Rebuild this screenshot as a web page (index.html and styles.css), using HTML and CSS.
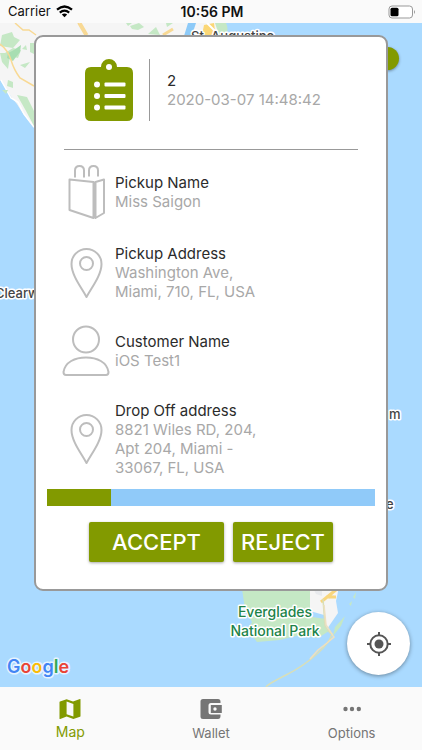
FILE: index.html
```html
<!DOCTYPE html>
<html lang="en">
<head>
<meta charset="utf-8">
<meta name="viewport" content="width=device-width, initial-scale=1">
<title>New order</title>
<link rel="stylesheet" href="styles.css">
</head>
<body>
<header class="status">
  <div class="carrier">Carrier
    <svg width="17" height="13" viewBox="0 0 17 13" fill="none" stroke="#000" stroke-width="2.2"><path d="M1 4.7Q8.500-1.700 16 4.700M3.800 7.700Q8.500 3.700 13.200 7.700"/><path d="M5.800 9.500Q8.500 7.300 11.200 9.500L8.500 12.300z" fill="#000" stroke="none"/></svg>
  </div>
  <div class="time">10:56 PM</div>
  <div class="battery">
    <svg width="28" height="14" viewBox="0 0 28 14"><rect x="1" y="1" width="23.500" height="12" rx="3" fill="#fff" stroke="#999"/><rect x="2.500" y="2.700" width="8" height="8.600" rx="1.500"/><path d="M26 5q2 2 0 4z" fill="#999"/></svg>
  </div>
</header>

<main class="stage">
  <svg class="map" viewBox="0 0 422 664" preserveAspectRatio="xMidYMid slice" aria-hidden="true">
    <rect width="422" height="664" fill="#aadaff"/>
    <path d="M0 0H225L222 20 100 85 34 105 22 89 17 81 12 75 0 57z" fill="#f5f5f5"/>
    <path d="M34 104 24 91 18 79 11 75 1 57" fill="none" stroke="#fff" stroke-width="1.500"/>
    <g fill="#c5e8c5">
      <path d="M2 12 12 9 14 14 20 17 13 25 0 23zM5 30 13 25 21 27 18 35 10 33 8 46 2 39 0 30zM30 20h4v11l-4-2zM22 26l4-4 1 5zM8 57l5 2 0 6-6-2zM17 72l10 2 7 14v15l-8-15zM20 42l10-3-5 6zM2 67l6 0-2 4zM130 3 139 0 144 4 138 7 132 6zM126 0h6l-4 3zM148 11 156 4 160 12zM166 0h7l-6 4z"/>
      <path d="M215 0h11q3 6 0 12h-7z"/>
    </g>
    <path d="M8 30 14 27 21 22 20 29 16 34 13 38 7 35z" fill="#a8deb2"/>
    <g fill="none" stroke="#f8d994" stroke-width="1.500">
      <path d="M0 21Q8 27 11 37T20 55L34 63M15 0 23 7 29 7 36 12M78 0 85 12"/>
      <path d="M80 0 87 12M173 6 163 12" stroke-width="3"/>
    </g>
    <path d="M188 0h8l-2 6-2 7h-8z" fill="#8dcaf8"/>
    <path d="M204 2 214 0 215 8 220 12H202z" fill="#fbd776"/>
    <path d="M207 0 217 10" stroke="#fff" stroke-width="2"/>
    <path d="M242 566H312V594L326 596 325 603 329 608 318 615 300 612 280 617 257 619 248 607 252 599 245 586z" fill="#c5e8c5"/>
    <path d="M310 564H339L336 578 338 590 327 606 324 592 310 588z" fill="#f5f5f5"/>
    <path d="M313 565h9v8l-6-2zM329 571l6 2-6 3z" fill="#e8eaed"/>
    <path d="M321 579 337 566M326 574h10" stroke="#f8d67d" stroke-width="3"/>
    <path d="M323 576 325 603Q329 610 332 611Q330 619 318 630Q304 643 286 652T266 664" stroke="#d8dfb9" stroke-width="1.500" fill="none"/>
    <path d="M324 582 326 602 334 614 327 620 318 627 310 636" stroke="#eee0c0" stroke-width="1.500" fill="none"/>
    <path d="M345 593 335 604 333 613 341 603zM349 581l3-3-1 5zM353 574l3-5-1 7z" fill="#c5e8c5"/>
    <g class="map-label">
      <text x="191" y="18">St. Augustine</text>
      <text x="-5" y="275">Clearwater</text>
      <text x="389" y="396">m</text>
      <text x="386" y="486">e</text>
    </g>
    <g class="park-label">
      <text x="275" y="594">Everglades</text>
      <text x="275" y="613">National Park</text>
    </g>
    <text class="google" x="7" y="650"><tspan fill="#4285f4">G</tspan><tspan fill="#ea4335">o</tspan><tspan fill="#fbbc05">o</tspan><tspan fill="#4285f4">g</tspan><tspan fill="#34a853">l</tspan><tspan fill="#ea4335">e</tspan></text>
  </svg>
  <span class="status-knob"></span>

  <section class="card">
    <div class="order">
      <svg width="48" height="62" viewBox="0 0 48 62"><path d="M6 8H16A8 8 0 0 1 32 8H42Q48 8 48 14V56Q48 62 42 62H6Q0 62 0 56V14Q0 8 6 8z" fill="#829a00"/><g fill="#fff"><circle cx="24" cy="8" r="3"/><circle cx="12" cy="25.500" r="3"/><circle cx="12" cy="37" r="3"/><circle cx="12" cy="48.500" r="3"/><rect x="19.500" y="23.500" width="21" height="4" rx="1"/><rect x="19.500" y="35" width="21" height="4" rx="1"/><rect x="19.500" y="46.500" width="21" height="4" rx="1"/></g></svg>
      <div class="order-info"><h1>2</h1><p>2020-03-07 14:48:42</p></div>
    </div>
    <div class="details">
      <div class="row">
        <svg width="48" height="56" viewBox="0 0 48 56"><path d="M7.500 15.500 31.500 18V54L7.500 46zM33.500 18 42 15.500V49L33.500 54zM32.500 18V54M13 13.500V6.500Q13 2 17.500 2T22 6.500V13.500M27 12.500V6.500Q27 2 31.500 2T36 6.500V12.500"/></svg>
        <div><h2>Pickup Name</h2><p>Miss Saigon</p></div>
      </div>
      <div class="row">
        <svg width="48" height="52" viewBox="0 0 48 52"><path d="M24.500 50C19 40 9.500 28 9.500 17A15 15 0 0 1 39.500 17C39.500 28 30 40 24.500 50z"/><circle cx="24.500" cy="16.500" r="6.500"/></svg>
        <div><h2>Pickup Address</h2><p>Washington Ave,<br>Miami, 710, FL, USA</p></div>
      </div>
      <div class="row">
        <svg width="48" height="52" viewBox="0 0 48 52"><circle cx="24" cy="14.500" r="13"/><path d="M4 50Q1.500 50 1.500 47C3 37 13 32.500 24 32.500S45 37 46.500 47Q46.500 50 44 50z"/></svg>
        <div><h2>Customer Name</h2><p>iOS Test1</p></div>
      </div>
      <div class="row">
        <svg width="48" height="52" viewBox="0 0 48 52"><path d="M24.500 50C19 40 9.500 28 9.500 17A15 15 0 0 1 39.500 17C39.500 28 30 40 24.500 50z"/><circle cx="24.500" cy="16.500" r="6.500"/></svg>
        <div><h2>Drop Off address</h2><p>8821 Wiles RD, 204,<br>Apt 204, Miami -<br>33067, FL, USA</p></div>
      </div>
    </div>
    <div class="progress" role="progressbar" aria-label="Time to respond" aria-valuemin="0" aria-valuemax="100" aria-valuenow="20"><div class="progress-fill" style="width:19.6%"></div></div>
    <div class="actions">
      <button class="accept" type="button">ACCEPT</button>
      <button class="reject" type="button">REJECT</button>
    </div>
  </section>

  <button class="locate" type="button" aria-label="My location">
    <svg width="26" height="26" viewBox="0 0 26 26" fill="none" stroke="#555" stroke-width="2"><circle cx="13" cy="13" r="8.700"/><circle cx="13" cy="13" r="4.500" fill="#555" stroke="none"/><path d="M13 1v4M13 21v4M1 13h4M21 13h4"/></svg>
  </button>
</main>

<nav class="tabs">
  <a class="tab active" href="#map">
    <svg width="24" height="24" viewBox="0 0 24 24" fill="currentColor"><path d="M22 2 15 4.600 8.600 2.200 2 4.500Q1.500 4.700 1.500 5.200V21.500Q1.500 22.300 2.300 22L8.600 19.600 15.400 22 22 19.700Q22.500 19.500 22.500 19V2.500Q22.500 1.800 22 2zM15.400 19.600 8.600 17.200V4.500L15.400 6.900z"/></svg>
    Map
  </a>
  <a class="tab" href="#wallet">
    <svg width="24" height="24" viewBox="0 0 24 24" fill="currentColor"><path d="M21.500 17.500V19Q21.500 22 19 22H4Q1.500 22 1.500 19.500V4.500Q1.500 2 4 2H19Q21.500 2 21.500 4.500V6H12Q9.500 6 9.500 8.500V15Q9.500 17.500 12 17.500z"/><path fill-rule="evenodd" d="M11.800 8H22.800V16H11.800zM16 10.300A1.700 1.700 0 1 0 16 13.700 1.700 1.700 0 1 0 16 10.300z"/></svg>
    Wallet
  </a>
  <a class="tab" href="#options">
    <svg width="24" height="24" viewBox="0 0 24 24" fill="currentColor"><circle cx="5.500" cy="12" r="2.200"/><circle cx="12" cy="12" r="2.200"/><circle cx="18.800" cy="12" r="2.200"/></svg>
    Options
  </a>
</nav>
</body>
</html>
```

FILE: styles.css
```css
* { box-sizing: border-box; }

body {
  margin: 0;
  min-height: 100vh;
  display: flex;
  flex-direction: column;
  font-family: Inter, "Liberation Sans", sans-serif;
  background: #fafafa;
}

h1, h2, p { margin: 0; font-weight: 400; }
svg { display: block; flex: none; }

.status {
  height: 23px;
  padding: 0 6px 0 8px;
  display: grid;
  grid-template-columns: 1fr auto 1fr;
  align-items: center;
  font-size: 13px;
  line-height: 23px;
  color: #111;
}
.carrier { display: flex; align-items: center; gap: 5px; }
.time { font-size: 14px; font-weight: 600; }
.battery { justify-self: end; }

.stage {
  position: relative;
  flex: 1;
  padding: 12px 34px 96px;
  overflow: hidden;
}
.map {
  position: absolute;
  inset: 0;
  width: 100%;
  height: 100%;
}
.map text { paint-order: stroke; stroke: #fff; stroke-width: 3px; stroke-linejoin: round; }
.map-label { font-size: 13px; font-weight: 500; fill: #444; }
.park-label { font-size: 14px; font-weight: 500; fill: #218349; text-anchor: middle; }
.map .google { font-size: 18px; font-weight: 600; stroke: #e6f3ff; }

.status-knob {
  position: absolute;
  top: 24px;
  right: 23px;
  width: 48px;
  height: 23px;
  border-radius: 12px;
  background: #829a00;
  box-shadow: 0 1px 3px rgba(0, 0, 0, .4);
}

.card {
  position: relative;
  border: 2px solid #999;
  border-radius: 9px;
  background: #fff;
  padding: 22px 11px 27px;
}

.order {
  display: flex;
  gap: 16px;
  margin: 0 17px;
  padding: 0 0 28px 21px;
  border-bottom: 1px solid #999;
}
.order-info {
  border-left: 1px solid #999;
  padding: 12px 0 0 17px;
}
.order-info, .row { font-size: 15px; line-height: 19px; color: #a8a8a8; }
h1, h2 { font-size: 15px; line-height: 19px; color: #2b2b2b; }

.details {
  display: grid;
  gap: 24px;
  padding: 14px 15px 12px;
}
.row { display: flex; align-items: center; gap: 5px; }
.row svg { fill: none; stroke: #bdbdbd; stroke-width: 2; stroke-linejoin: round; }

.progress { height: 17px; background: #90caf9; }
.progress-fill { height: 100%; background: #829a00; }

.actions {
  display: flex;
  justify-content: center;
  gap: 9px;
  margin-top: 16px;
}
.actions button {
  height: 40px;
  padding: 0;
  border: 0;
  border-radius: 2px;
  background: #829a00;
  color: #fff;
  font: 500 22px/40px Inter, "Liberation Sans", sans-serif;
  box-shadow: 0 1px 3px rgba(0, 0, 0, .35);
}
.actions .accept { width: 135px; }
.actions .reject { width: 100px; }

.locate {
  position: absolute;
  right: 12px;
  bottom: 12px;
  width: 63px;
  height: 63px;
  padding: 0;
  border: 0;
  border-radius: 50%;
  background: #fff;
  display: grid;
  place-items: center;
  box-shadow: 0 1px 4px rgba(0, 0, 0, .4);
}

.tabs {
  height: 63px;
  display: grid;
  grid-template-columns: repeat(3, 1fr);
  background: #fafafa;
}
.tab {
  display: flex;
  flex-direction: column;
  align-items: center;
  padding-top: 10px;
  gap: 3px;
  font-size: 13px;
  line-height: 18px;
  color: #757575;
  text-decoration: none;
}
.tab.active { font-size: 14px; line-height: 16px; color: #829a00; }
```
